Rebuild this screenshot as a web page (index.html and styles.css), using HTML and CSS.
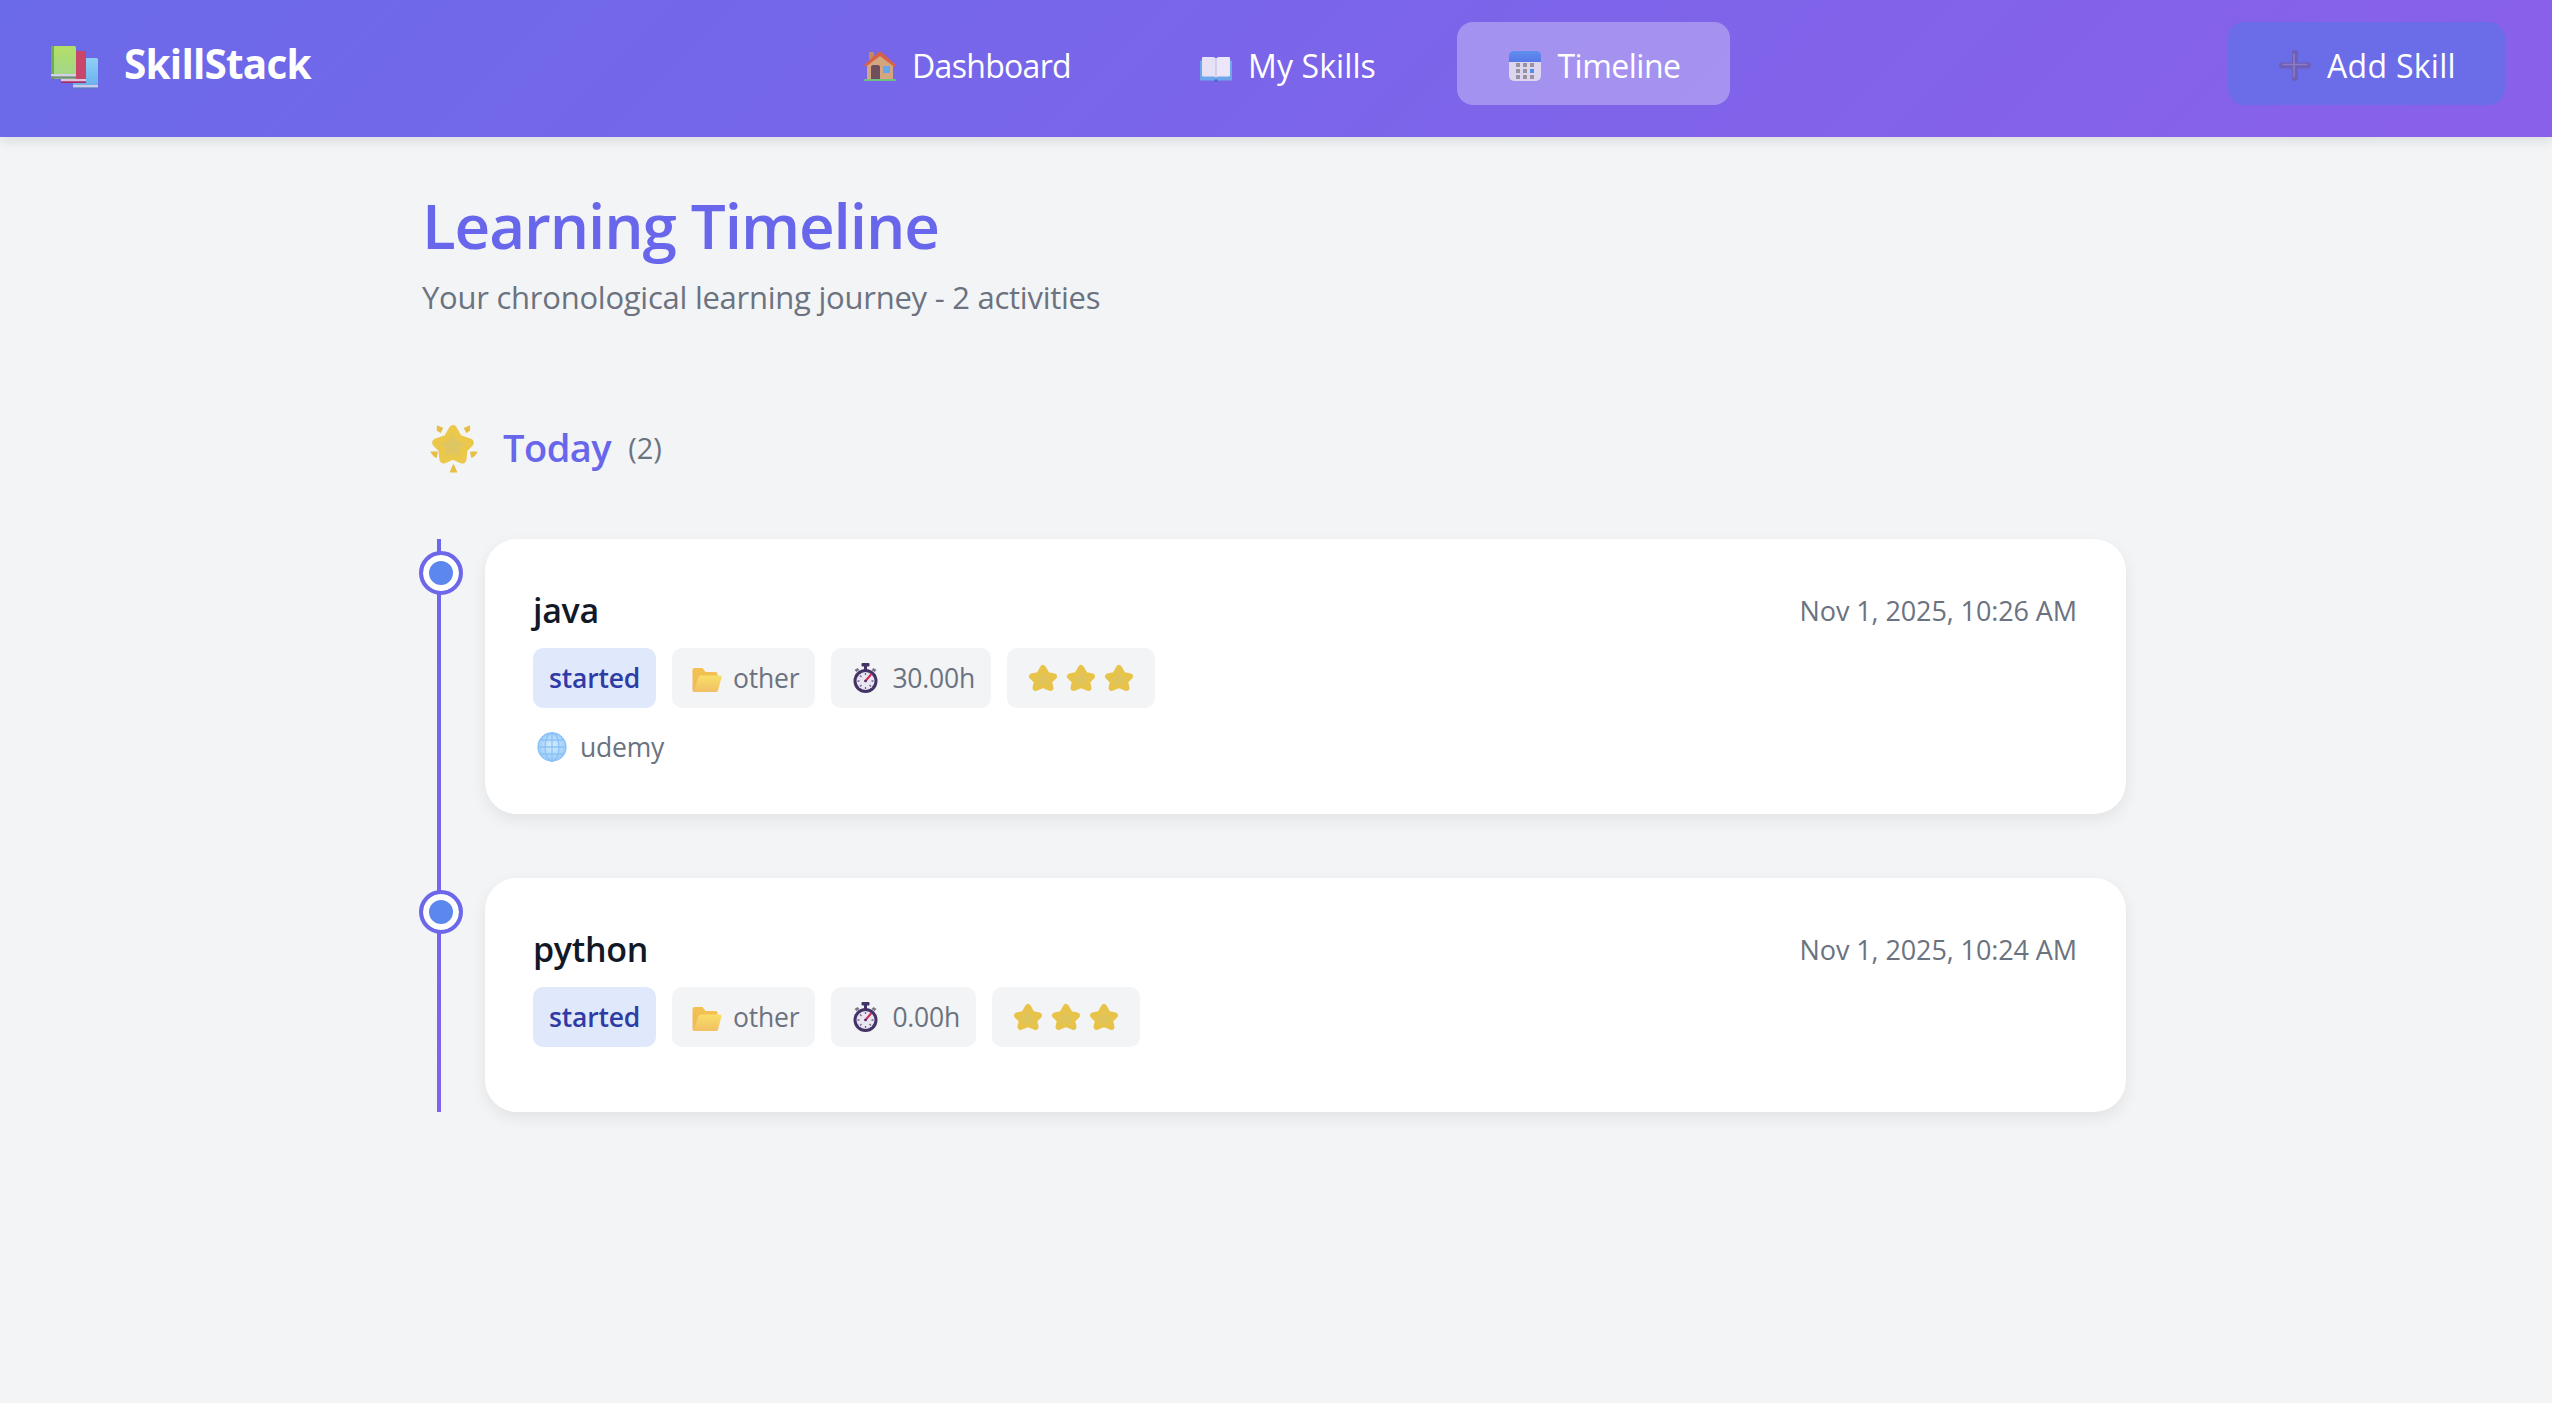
FILE: index.html
```html
<!DOCTYPE html>
<html lang="en">
<head>
<meta charset="utf-8">
<title>SkillStack</title>
<link rel="stylesheet" href="styles.css">
</head>
<body>
<svg class="sprite" aria-hidden="true">
  <defs>
    <linearGradient id="gGreen" x1="0" y1="0" x2="0" y2="1"><stop offset="0" stop-color="#b3de66"/><stop offset="1" stop-color="#9fd68f"/></linearGradient>
    <linearGradient id="gBlue" x1="0" y1="0" x2="0" y2="1"><stop offset="0" stop-color="#8fd0f5"/><stop offset="1" stop-color="#66aeee"/></linearGradient>
    <linearGradient id="gHead" x1="0" y1="0" x2="0" y2="1"><stop offset="0" stop-color="#5e8ff0"/><stop offset="1" stop-color="#5878e6"/></linearGradient>
    <linearGradient id="gFolderB" x1="0" y1="0" x2="0" y2="1"><stop offset="0" stop-color="#f4c24f"/><stop offset="1" stop-color="#eeb75e"/></linearGradient>
    <linearGradient id="gFolderF" x1="0" y1="0" x2="0" y2="1"><stop offset="0" stop-color="#f8df68"/><stop offset="1" stop-color="#f1bf65"/></linearGradient>
    <radialGradient id="gStar" cx="0.5" cy="0.55" r="0.6"><stop offset="0" stop-color="#dfc45c"/><stop offset="1" stop-color="#eec845"/></radialGradient>
    <radialGradient id="gGlobe" cx="0.5" cy="0.45" r="0.6"><stop offset="0" stop-color="#d8eefe"/><stop offset="1" stop-color="#92c6f8"/></radialGradient>
    <symbol id="i-books" viewBox="0 0 48 44">
      <rect x="22" y="12" width="25" height="31" rx="1.5" fill="url(#gBlue)"/>
      <rect x="22" y="39" width="25" height="2.5" fill="#d3c7e6"/><rect x="22" y="41.5" width="25" height="1.5" fill="#5f79c4"/>
      <rect x="10" y="5" width="25" height="32" rx="1.5" fill="#c9456a"/>
      <rect x="10" y="33" width="25" height="2.5" fill="#dcc4e2"/><rect x="10" y="35.5" width="25" height="1.5" fill="#a52a62"/>
      <rect x="0" y="0" width="25" height="33" rx="1.5" fill="url(#gGreen)"/>
      <rect x="0" y="0" width="3" height="33" fill="#6fae50"/>
      <rect x="0" y="28" width="25" height="2.5" fill="#d5d0e8"/><rect x="0" y="30.5" width="25" height="2" fill="#6b8a7a"/>
    </symbol>
    <symbol id="i-house" viewBox="0 0 32 32">
      <rect x="5" y="2" width="5" height="11" fill="#c18a5d"/>
      <path d="M3 14 16 4l13 10v15H3z" fill="#d3a67f"/>
      <path d="M0 15 14 2.500q2-1.500 4 0L32 15l-1.500 2L16 6 1.500 17z" fill="#d6604a"/>
      <path d="M7 29V17q0-2 2-2h5q2 0 2 2v12z" fill="#6f4e5d"/>
      <rect x="19" y="16" width="7" height="7" rx=".6" fill="#63a8ef"/>
      <rect x="0" y="29" width="32" height="2" rx="1" fill="#6fc27e"/>
    </symbol>
    <symbol id="i-book" viewBox="0 0 32 32">
      <g transform="translate(0 4.500)">
        <path d="M0 6h32v19q0 1-1 1H18l-2 1-2-1H1q-1 0-1-1z" fill="#6ea6ec"/>
        <path d="M2 3.500q0-1 1-1h10q2 0 3 1.500v19q-1-1-3-1H3q-1 0-1-1z" fill="#e7e1f5"/>
        <path d="M30 3.500q0-1-1-1H19q-2 0-3 1.500v19q1-1 3-1h10q1 0 1-1z" fill="#ece7f8"/>
        <path d="M16 4v19" stroke="#b9aedc" stroke-width=".8"/>
        <rect x="14.500" y="25" width="3" height="2.500" fill="#3f66b8"/>
      </g>
    </symbol>
    <symbol id="i-cal" viewBox="0 0 32 32">
      <g transform="translate(0 -1)">
        <rect x="0" y="9" width="32" height="23" rx="5" fill="#ddd6ee"/>
        <path d="M0 13V7q0-5 5-5h22q5 0 5 5v6z" fill="url(#gHead)"/>
        <g fill="#99939f">
          <rect x="7" y="14" width="4" height="4"/><rect x="14" y="14" width="4" height="4"/><rect x="21" y="14" width="4" height="4"/>
          <rect x="7" y="20" width="4" height="4"/><rect x="14" y="20" width="4" height="4"/>
          <rect x="7" y="26" width="4" height="4"/><rect x="14" y="26" width="4" height="4"/><rect x="21" y="26" width="4" height="4"/>
        </g>
        <rect x="21" y="20" width="4" height="4" fill="#4f8fe8"/>
      </g>
    </symbol>
    <symbol id="i-plus" viewBox="0 0 32 32">
      <path d="M16 3v25M3 15.500h26" stroke="#6f5fb4" stroke-width="6" stroke-linecap="round"/>
      <path d="M15 4v23M4 14.500h24" stroke="#8a7cc8" stroke-width="1.600" stroke-linecap="round"/>
    </symbol>
    <symbol id="i-star" viewBox="0 0 32 32">
      <polygon points="16,5 20,12 27,13.500 22,18.500 23.500,25 16,22 8.500,25 10,18.500 5,13.500 12,12" fill="url(#gStar)" stroke="#e8c34a" stroke-width="6" stroke-linejoin="round"/>
      <polygon points="16,8 19,13.500 24,15 20.500,18.500 21,23 16,20.500 11,23 11.500,18.500 8,15 13,13.500" fill="#dfc45c"/>
    </symbol>
    <symbol id="i-glow" viewBox="0 0 48 48">
      <polygon points="23,5 28,14 39,18 33,24 32,34 23,30 14,34 13,24 7,18 18,14" fill="#e9c74e" stroke="#ecc84a" stroke-width="8" stroke-linejoin="round"/>
      <polygon points="23,9 27,16 35,19 30,24 29,31 23,28 17,31 16,24 11,19 19,16" fill="#dfc660"/>
      <g fill="#e6bd45" stroke="#e6bd45" stroke-width="1" stroke-linejoin="round">
        <path d="M8 2l5 2-2 4-3-2z"/><path d="M39 2l-5 2 2 4 3-2z"/>
        <path d="M2 27l6 0-1 5-2-1z"/><path d="M46 27l-6 0 1 5 2-1z"/>
        <path d="M23.500 39l3 7h-6z"/>
      </g>
    </symbol>
    <symbol id="i-folder" viewBox="0 0 32 32">
      <g transform="translate(0 2)">
        <path d="M2 6q0-2 2-2h8l3 4h10q2 0 2 2v16q0 2-2 2H4q-2 0-2-2z" fill="url(#gFolderB)"/>
        <path d="M8 13q.3-1.500 2-1.500h19q2.500 0 2 2l-3.500 13q-.4 1.500-2 1.500H5q-2 0-1.500-2z" fill="url(#gFolderF)"/>
      </g>
    </symbol>
    <symbol id="i-watch" viewBox="0 0 32 32">
      <g transform="translate(0 1)">
        <rect x="12" y="0" width="8" height="3.500" rx="1" fill="#443366"/>
        <rect x="14.500" y="3" width="3" height="4" fill="#443366"/>
        <path d="M5 7l3-2 2 2-3 2zM27 7l-3-2-2 2 3 2z" fill="#7a7488"/>
        <circle cx="16" cy="18" r="12" fill="#443366"/>
        <circle cx="16" cy="18" r="9" fill="#e9e5f2"/>
        <path d="M16 10v2M16 24v2M8 18h2M22 18h2M10.500 12.500l1.500 1.500M21.500 23.500 20 22M10.500 23.500 12 22" stroke="#6f6788" stroke-width="1.300"/>
        <path d="M16 18 21.500 11.500" stroke="#d2295c" stroke-width="2" stroke-linecap="round"/>
        <circle cx="16" cy="18" r="1.300" fill="#443366"/>
      </g>
    </symbol>
    <symbol id="i-globe" viewBox="0 0 32 32">
      <circle cx="16" cy="16" r="14" fill="url(#gGlobe)"/>
      <g fill="none" stroke="#8ac1f6" stroke-width="1.300">
        <ellipse cx="16" cy="16" rx="7" ry="14"/>
        <path d="M16 2v28M2 16h28M4 9h24M4 23h24"/>
        <circle cx="16" cy="16" r="14"/>
      </g>
    </symbol>
  </defs>
</svg>

<header class="topbar">
  <a class="logo"><svg class="logo-icon"><use href="#i-books"/></svg><span>SkillStack</span></a>
  <nav class="nav">
    <a class="nav-link nav-dashboard"><svg class="ico32"><use href="#i-house"/></svg>Dashboard</a>
    <a class="nav-link nav-skills"><svg class="ico32"><use href="#i-book"/></svg>My Skills</a>
    <a class="nav-link nav-timeline active"><svg class="ico32"><use href="#i-cal"/></svg>Timeline</a>
  </nav>
  <div class="actions">
    <button class="add-btn"><svg class="ico32"><use href="#i-plus"/></svg>Add Skill</button>
  </div>
</header>

<main class="page">
  <h1 class="title">Learning Timeline</h1>
  <p class="subtitle">Your chronological learning journey - 2 activities</p>

  <section class="group">
    <div class="group-head">
      <svg class="glow"><use href="#i-glow"/></svg>
      <h2 class="group-name">Today</h2>
      <span class="group-count">(2)</span>
    </div>
    <div class="timeline">
      <article class="item">
        <span class="dot"></span>
        <div class="card">
          <div class="card-top">
            <h3 class="skill">java</h3>
            <time class="date">Nov 1, 2025, 10:26 AM</time>
          </div>
          <div class="chips">
            <span class="chip status">started</span>
            <span class="chip"><svg class="chip-ico"><use href="#i-folder"/></svg>other</span>
            <span class="chip"><svg class="chip-ico"><use href="#i-watch"/></svg>30.00h</span>
            <span class="chip stars"><svg class="ico32"><use href="#i-star"/></svg><svg class="ico32"><use href="#i-star"/></svg><svg class="ico32"><use href="#i-star"/></svg></span>
          </div>
          <div class="source"><svg class="ico32"><use href="#i-globe"/></svg>udemy</div>
        </div>
      </article>
      <article class="item">
        <span class="dot"></span>
        <div class="card">
          <div class="card-top">
            <h3 class="skill">python</h3>
            <time class="date">Nov 1, 2025, 10:24 AM</time>
          </div>
          <div class="chips">
            <span class="chip status">started</span>
            <span class="chip"><svg class="chip-ico"><use href="#i-folder"/></svg>other</span>
            <span class="chip"><svg class="chip-ico"><use href="#i-watch"/></svg>0.00h</span>
            <span class="chip stars"><svg class="ico32"><use href="#i-star"/></svg><svg class="ico32"><use href="#i-star"/></svg><svg class="ico32"><use href="#i-star"/></svg></span>
          </div>
        </div>
      </article>
    </div>
  </section>
</main>
</body>
</html>
```
FILE: styles.css
```css
* { box-sizing: border-box; }
html, body { margin: 0; padding: 0; }
body {
  min-height: 1403px;
  background: #f3f4f6;
  color: #111827;
  font-family: "Open Sans", "Noto Sans", "Liberation Sans", sans-serif;
}
.sprite { position: absolute; width: 0; height: 0; overflow: hidden; }

.topbar {
  display: flex;
  align-items: center;
  height: 137px;
  padding: 0 47px 10px 51px;
  background: linear-gradient(135deg, #6b6ae9 0%, #8a60ea 100%);
  box-shadow: 0 6px 10px rgba(0, 0, 0, 0.08);
  color: #fff;
}
.logo { flex: 1; display: flex; align-items: center; gap: 25px; font-size: 40.5px; font-weight: 700; letter-spacing: -0.8px; }
.logo-icon { width: 48px; height: 44px; margin-top: 8px; flex: none; }
.nav { display: flex; gap: 32px; margin-right: 10px; }
.nav-link {
  display: flex;
  align-items: center;
  justify-content: center;
  gap: 16px;
  height: 83px;
  padding: 3px 0 0 3px;
  border-radius: 16px;
  font-size: 32px;
  font-weight: 500;
  letter-spacing: -0.5px;
}
.nav-link .ico32 { margin-top: 2px; }
.add-btn .ico32 { margin-top: 2px; }
.nav-dashboard { width: 300px; letter-spacing: -0.7px; }
.nav-skills { width: 277px; letter-spacing: 0.1px; }
.nav-timeline { width: 273px; }
.nav-link.active { background: rgba(255, 255, 255, 0.3); }
.actions { flex: 1; display: flex; justify-content: flex-end; }
.add-btn {
  display: flex;
  align-items: center;
  justify-content: center;
  gap: 16px;
  width: 277px;
  height: 83px;
  padding: 3px 0 0 2px;
  border: 0;
  border-radius: 16px;
  background: #6a6ce8;
  color: #fff;
  font-family: inherit;
  font-size: 32px;
  font-weight: 500;
  letter-spacing: 0.3px;
}
.ico32 { width: 32px; height: 32px; flex: none; }
.chip-ico { width: 37px; height: 32px; flex: none; }

.page { width: 1708px; margin: 0 auto; padding-top: 46px; }
.title { margin: 0; color: #6866eb; font-size: 62px; line-height: 84px; font-weight: 600; letter-spacing: -1.1px; }
.subtitle { margin: 9px 0 0; color: #6b7280; font-size: 31px; line-height: 42px; letter-spacing: -0.25px; }

.group { margin-top: 105px; }
.group-head { display: flex; align-items: center; height: 48px; padding-left: 7px; }
.glow { width: 50px; height: 50px; flex: none; margin-top: 4px; }
.group-name { margin: 0 0 0 24px; color: #6866eb; font-size: 38px; font-weight: 600; letter-spacing: -0.5px; }
.group-count { margin-left: 17px; color: #6b7280; font-size: 29px; }

.timeline { position: relative; margin-top: 68px; padding-left: 63px; padding-right: 4px; }
.timeline::before {
  content: "";
  position: absolute;
  left: 15px;
  top: 0;
  bottom: 0;
  width: 4px;
  background: linear-gradient(180deg, #6d68ec, #8163ee);
}
.item { position: relative; margin-bottom: 64px; }
.item:last-child { margin-bottom: 0; }
.dot {
  position: absolute;
  left: -66px;
  top: 12px;
  width: 44px;
  height: 44px;
  border: 4px solid #6f67ea;
  border-radius: 50%;
  background: #5b87ee;
  box-shadow: inset 0 0 0 6px #fff;
}
.card {
  padding: 45px 49px 47px 48px;
  background: #fff;
  border-radius: 32px;
  box-shadow: 0 6px 16px rgba(0, 0, 0, 0.07);
}
.card-top { display: flex; justify-content: space-between; align-items: center; height: 52px; }
.skill { margin: 0; color: #111827; font-size: 34px; font-weight: 600; letter-spacing: -0.3px; }
.date { color: #6b7280; font-size: 27px; letter-spacing: -0.1px; }
.chips { display: flex; gap: 16px; margin-top: 12px; margin-bottom: 18px; }
.chip {
  display: flex;
  align-items: center;
  gap: 8px;
  height: 60px;
  padding: 0 16px;
  border-radius: 10px;
  background: #f3f4f6;
  color: #6b7280;
  font-size: 26.5px;
  letter-spacing: -0.2px;
}
.chip.status { background: #e0e9fb; color: #2f3ba5; font-weight: 600; }
.chip.stars { gap: 6px; padding: 0 20px; }
.chip.stars .ico32 { margin-top: 2px; }
.source { display: flex; align-items: center; gap: 12px; height: 41px; padding-left: 3px; color: #6b7280; font-size: 26.5px; letter-spacing: -0.2px; }
```
